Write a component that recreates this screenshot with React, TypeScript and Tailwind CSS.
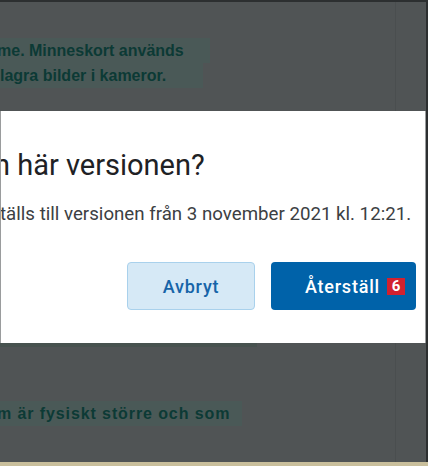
import React from "react";

export default function App() {
  const bgFont = { fontFamily: '"Liberation Sans", Arial, sans-serif' };
  const uiFont = { fontFamily: 'Roboto, "Noto Sans", sans-serif' };
  return (
    <div className="relative w-[428px] h-[466px] overflow-hidden bg-[#505455]">
      {/* page frame */}
      <div className="flex h-full flex-col">
        <div className="h-[2px] bg-[#2c2f30]" />
        <div className="flex flex-1">
          <div className="flex w-[395px] flex-col" style={bgFont}>
            <div className="h-[36px]" />
            <div className="flex flex-col items-start text-[16px] font-bold leading-[25px] text-[#0c3a35]">
              <span className="w-[210px] bg-[#4a5957] whitespace-nowrap">
                <span className="ml-[-3px]">me. Minneskort används</span>
              </span>
              <span className="w-[203px] bg-[#4a5957] whitespace-nowrap">lagra bilder i kameror.</span>
            </div>
            <div className="h-[233px]" />
            <div className="h-[26px] w-[257px] bg-[#47524f]" />
            <div className="h-[54px]" />
            <div className="flex flex-col items-start text-[16px] font-bold leading-[25px] text-[#0c3a35]">
              <span className="w-[242px] bg-[#4a5957] whitespace-nowrap">
                <span className="ml-[-3px] tracking-[0.9px]">m är fysiskt större och som</span>
              </span>
            </div>
          </div>
          <div className="w-[1px] bg-[#4a4e4f]" />
          <div className="flex-1 bg-[#505455]" />
          <div className="w-[2px] bg-[#2c2f30]" />
        </div>
        <div className="h-[4px] bg-[#c9bf9c]" />
      </div>

      {/* dialog */}
      <div
        className="absolute left-0 top-[111px] flex h-[232px] w-[426px] flex-col overflow-hidden border-l border-r border-[#9a9c9d] bg-white"
        style={uiFont}
      >
        <div className="mt-[36px] whitespace-nowrap text-[29px] leading-[36px] text-[#202124]">
          <span className="ml-[-7px]">n här versionen?</span>
        </div>
        <div className="mt-[19px] whitespace-nowrap text-[18.7px] leading-[24px] text-[#3c4043]">
          <span className="ml-[-1px]">tälls till versionen från 3 november 2021 kl. 12:21.</span>
        </div>
        <div className="mt-[36px] flex justify-end gap-[16px] pr-[9px]">
          <button className="flex h-[48px] w-[128px] items-center justify-center rounded-[4px] border border-[#a9d1ec] bg-[#d6e9f6] text-[18px] font-medium tracking-[0.8px] text-[#1664a8]">
            Avbryt
          </button>
          <button className="flex h-[48px] w-[145px] items-center justify-end gap-[7px] rounded-[4px] bg-[#0062a9] pr-[11px] text-[18px] font-medium tracking-[0.8px] text-white">
            <span>Återställ</span>
            <span className="flex h-[17px] w-[18px] items-center justify-center bg-[#d2212f] text-[15px] font-bold leading-none tracking-normal text-white">
              6
            </span>
          </button>
        </div>
      </div>
    </div>
  );
}
